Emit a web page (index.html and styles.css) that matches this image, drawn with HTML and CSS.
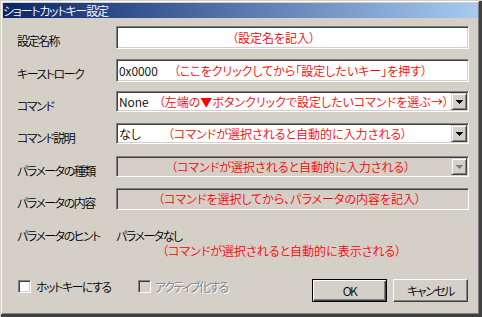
FILE: index.html
```html
<!DOCTYPE html>
<html lang="ja">

<head>
    <meta charset="UTF-8">
    <title>ショートカットキー設定</title>
    <link rel="stylesheet" href="styles.css">
</head>

<body>
    <div class="window">
        <div class="titlebar">ショートカットキー設定</div>

        <div class="content">
            <div class="form">
                <label class="label">設定名称</label>
                <div class="edit tall">
                    <span class="note note-name">（設定名を記入）</span>
                </div>

                <label class="label">キーストローク</label>
                <div class="edit tall">
                    <span class="value">0x0000</span>
                    <span class="note note-key">（ここをクリックしてから「設定したいキー」を押す）</span>
                </div>

                <label class="label">コマンド</label>
                <div class="edit combo">
                    <span class="value">None</span>
                    <span class="note note-cmd">（左端の▼ボタンクリックで設定したいコマンドを選ぶ→）</span>
                    <span class="drop">
                        <svg width="7" height="4" viewBox="0 0 7 4" shape-rendering="crispEdges">
                            <path d="M0 0h7v1h-1v1h-1v1h-1v1h-1v-1h-1v-1h-1v-1h-1z" fill="#000" />
                        </svg>
                    </span>
                </div>

                <label class="label">コマンド説明</label>
                <div class="edit combo">
                    <span class="value">なし</span>
                    <span class="note note-desc">（コマンドが選択されると自動的に入力される）</span>
                    <span class="drop">
                        <svg width="7" height="4" viewBox="0 0 7 4" shape-rendering="crispEdges">
                            <path d="M0 0h7v1h-1v1h-1v1h-1v1h-1v-1h-1v-1h-1v-1h-1z" fill="#000" />
                        </svg>
                    </span>
                </div>

                <label class="label">パラメータの種類</label>
                <div class="edit combo disabled">
                    <span class="note note-type">（コマンドが選択されると自動的に入力される）</span>
                    <span class="drop">
                        <svg width="7" height="4" viewBox="0 0 7 4" shape-rendering="crispEdges">
                            <path d="M0 0h7v1h-1v1h-1v1h-1v1h-1v-1h-1v-1h-1v-1h-1z" fill="#808080" />
                        </svg>
                    </span>
                </div>

                <label class="label">パラメータの内容</label>
                <div class="edit disabled">
                    <span class="note note-param">（コマンドを選択してから、パラメータの内容を記入）</span>
                </div>

                <span class="label">パラメータのヒント</span>
                <div class="hint">
                    <span class="hint-value">パラメータなし</span>
                    <span class="note note-hint">（コマンドが選択されると自動的に表示される）</span>
                </div>
            </div>

            <div class="footer">
                <label class="check check-hotkey"><span class="box"></span>ホットキーにする</label>
                <label class="check check-active disabled"><span class="box"></span>アクティブ化する</label>
                <div class="buttons">
                    <button class="btn default">OK</button>
                    <button class="btn">キャンセル</button>
                </div>
            </div>
        </div>
    </div>
</body>

</html>
```

FILE: styles.css
```css
* {
    margin: 0;
    padding: 0;
    box-sizing: border-box;
}

body {
    background-color: #d4d0c8;
    font: 350 12px "Noto Sans CJK JP", sans-serif;
    font-feature-settings: "palt";
    color: #000;
}

.window {
    width: 482px;
    height: 317px;
    padding: 3px 4px 4px 3px;
    background-color: #d4d0c8;
    box-shadow:
        inset 1px 1px #d4d0c8,
        inset -3px -3px #404040,
        inset 2px 2px #fff,
        inset -4px -4px #808080;
}

.titlebar {
    height: 15px;
    line-height: 15px;
    color: #fff;
    background: linear-gradient(to right, #0a246a, #a6caf0);
    white-space: nowrap;
    letter-spacing: -1.2px;
}

.content {
    padding: 8px 0 0 14px;
}

.form {
    display: grid;
    grid-template-columns: 99px 353px;
    grid-template-rows: 33px 32px 32px 33px 32px 33px auto;
}

/* the dialog's own captions are narrower than the red notes */
.label,
.hint-value,
.check,
.btn {
    letter-spacing: -1.5px;
}

.label {
    padding-top: 8px;
    line-height: 14px;
    white-space: nowrap;
}

/* sunken edit / combo box */
.edit {
    height: 22px;
    display: flex;
    align-items: center;
    padding: 0 1px 0 2px;
    background-color: #fff;
    border: 1px solid;
    border-color: #808080 #fff #fff #808080;
    box-shadow: inset 1px 1px #404040, inset -1px -1px #d4d0c8;
    white-space: nowrap;
    overflow: hidden;
}

.edit.tall {
    height: 23px;
}

.edit.combo {
    height: 21px;
}

.edit.disabled {
    background-color: #d4d0c8;
}

.value {
    line-height: 14px;
}

.note {
    color: #f00;
    line-height: 14px;
}

.note-name {
    margin-left: 113px;
}

.note-key {
    margin-left: 16px;
}

.note-cmd {
    margin-left: 10px;
}

.note-desc {
    margin-left: 27px;
}

.note-type {
    margin-left: 52px;
}

.note-param {
    margin-left: 39px;
}

.note-hint {
    display: block;
    margin-left: 46px;
    margin-top: 1px;
    letter-spacing: 0;
}

.drop {
    margin-left: auto;
    width: 16px;
    height: 17px;
    flex-shrink: 0;
    display: flex;
    align-items: center;
    justify-content: center;
    background-color: #d4d0c8;
    border: 1px solid;
    border-color: #d4d0c8 #404040 #404040 #d4d0c8;
    box-shadow: inset 1px 1px #fff, inset -1px -1px #808080;
}

.hint {
    padding-top: 8px;
    line-height: 14px;
}

.footer {
    display: flex;
    align-items: flex-start;
    margin-top: 21px;
    padding-left: 1px;
}

.check {
    display: flex;
    align-items: center;
    gap: 5px;
    margin-top: 1px;
    line-height: 13px;
    white-space: nowrap;
}

.check-hotkey {
    width: 120px;
}

.check-active {
    gap: 4px;
}

.check .box {
    width: 13px;
    height: 13px;
    background-color: #fff;
    border: 1px solid;
    border-color: #808080 #fff #fff #808080;
    box-shadow: inset 1px 1px #404040, inset -1px -1px #d4d0c8;
}

.check.disabled {
    color: #808080;
    text-shadow: 1px 1px #fff;
}

.check.disabled .box {
    background-color: #d4d0c8;
}

.buttons {
    display: flex;
    gap: 6px;
    margin-left: auto;
    margin-right: 10px;
}

.btn {
    width: 75px;
    height: 23px;
    font: inherit;
    color: #000;
    background-color: #d4d0c8;
    border: 1px solid;
    border-color: #fff #404040 #404040 #fff;
    box-shadow: inset -1px -1px #808080;
}

.btn.default {
    border-color: #000;
    box-shadow: inset 1px 1px #fff, inset -1px -1px #404040, inset -2px -2px #808080;
}
```
